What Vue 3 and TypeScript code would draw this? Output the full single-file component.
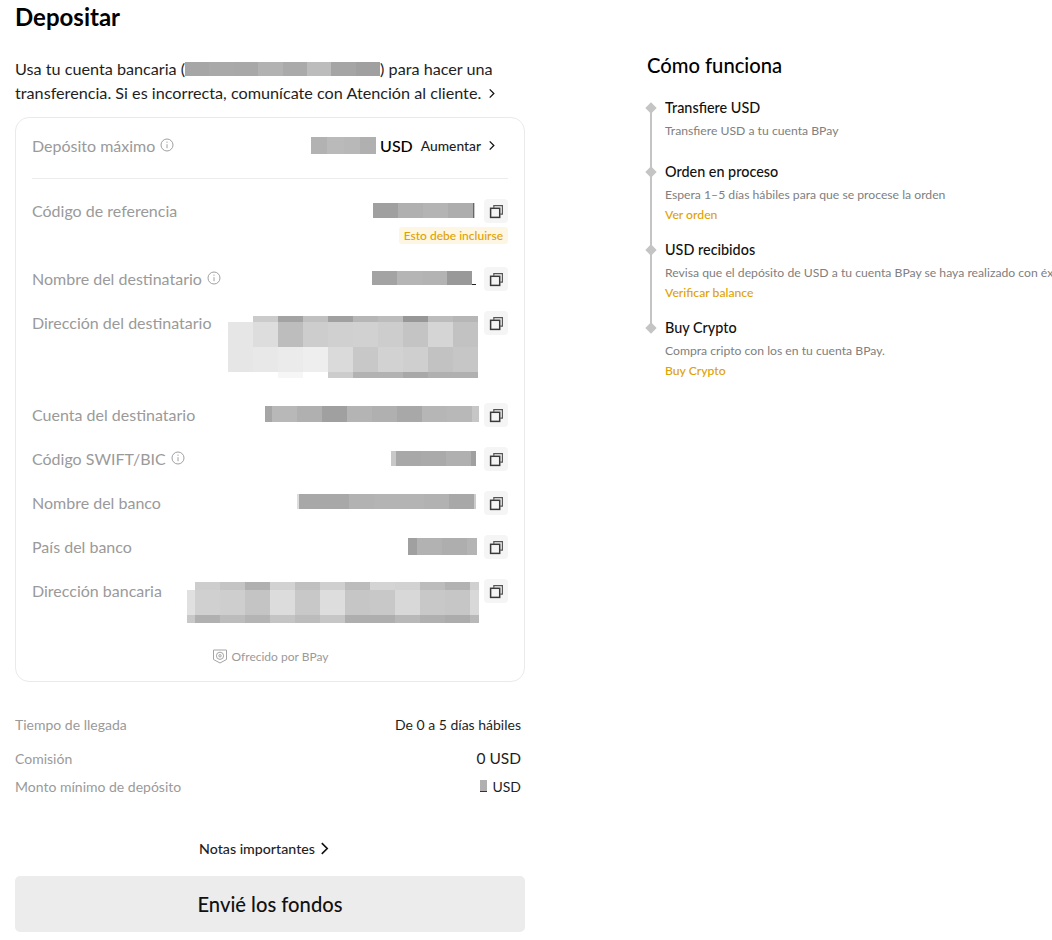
<template>
  <div class="page">
    <section class="left">
      <h1>Depositar</h1>
      <p class="intro">
        <span class="line">Usa tu cuenta bancaria (<span class="intro-mask"><i v-for="(c, i) in introCells" :key="i" :style="{ background: c }"></i></span>) para hacer una</span>
        <span class="line">transferencia. Si es incorrecta, comunícate con Atención al cliente.
          <svg class="chev-sm" viewBox="0 0 8 12"><path d="M1.5 1.5 6 6l-4.5 4.5" /></svg>
        </span>
      </p>

      <div class="card">
        <div class="max-row">
          <span class="label">Depósito máximo
            <svg class="info" viewBox="0 0 14 14"><circle cx="7" cy="7" r="6" /><path d="M7 6.2v4M7 3.6v1.2" /></svg>
          </span>
          <span class="max-value">
            <span class="mask-row max-mask">
              <i v-for="(c, i) in maxCells" :key="i" :style="cellStyle(c)"></i>
            </span>
            <b>USD</b>
            <span class="raise">Aumentar</span>
            <svg class="chev-sm" viewBox="0 0 8 12"><path d="M1.5 1.5 6 6l-4.5 4.5" /></svg>
          </span>
        </div>
        <div class="divider"></div>

        <div v-for="row in rows" :key="row.label" class="row" :style="{ minHeight: row.height + 'px' }">
          <span class="label">{{ row.label }}
            <svg v-if="row.info" class="info" viewBox="0 0 14 14"><circle cx="7" cy="7" r="6" /><path d="M7 6.2v4M7 3.6v1.2" /></svg>
          </span>
          <div class="value">
            <div class="value-line">
              <div class="mask" :style="{ marginTop: row.top + 'px', marginRight: row.gap + 'px' }">
                <div
                  v-for="(m, i) in row.mask"
                  :key="i"
                  class="mask-row"
                  :style="{ height: m.h + 'px' }"
                >
                  <i v-for="(c, j) in m.cells" :key="j" :style="cellStyle(c)"></i>
                </div>
              </div>
              <button class="copy" type="button">
                <svg viewBox="0 0 14 14"><path class="back" d="M4.5 3.5V1.5h8v8h-2" /><rect x="1.5" y="4" width="8.5" height="8.5" /></svg>
              </button>
            </div>
            <span v-if="row.badge" class="badge">{{ row.badge }}</span>
          </div>
        </div>

        <div class="offered">
          <svg viewBox="0 0 16 16"><path d="M1.5 2h13v9.5L8 15l-6.5-3.5z" /><circle cx="8" cy="7.8" r="3.6" /><circle cx="8" cy="7.8" r="1.2" /></svg>
          Ofrecido por BPay
        </div>
      </div>

      <div class="summary">
        <div class="sum-row first"><span>Tiempo de llegada</span><span class="dark">De 0 a 5 días hábiles</span></div>
        <div class="sum-row second"><span>Comisión</span><span class="dark big">0 USD</span></div>
        <div class="sum-row third"><span>Monto mínimo de depósito</span><span class="dark min-value"><i class="min-mask"></i>USD</span></div>
      </div>

      <a class="notes">Notas importantes
        <svg viewBox="0 0 8 12"><path d="M1.5 1 6.5 6l-5 5" /></svg>
      </a>
      <button class="send" type="button">Envié los fondos</button>
    </section>

    <aside class="right">
      <h2>Cómo funciona</h2>
      <ul class="steps">
        <li v-for="(s, i) in steps" :key="s.title" class="step" :class="{ last: i === steps.length - 1 }" :style="{ height: s.height + 'px' }">
          <span class="dot"></span>
          <div class="step-title">{{ s.title }}</div>
          <div class="step-text">{{ s.text }}</div>
          <a v-if="s.link" class="step-link">{{ s.link }}</a>
        </li>
      </ul>
    </aside>
  </div>
</template>

<script setup lang="ts">
interface MaskRow {
  h: number;
  cells: string[];
}

interface Row {
  label: string;
  info?: boolean;
  badge?: string;
  height: number;
  top: number;
  gap: number;
  mask: MaskRow[];
}

const clear = "transparent";
// residue of the blurred text under the last mosaic block
const underline = "linear-gradient(transparent 92%, #222 92%)|4";

// a cell is "colour" (25px wide) or "colour|width"
const cellStyle = (cell: string) => {
  const [background, width] = cell.split("|");
  return { background, width: (width ?? "25") + "px" };
};

const introCells = ["#a6a6a6", "#a9a9a9", "#a8a8a8", "#b2b2b2", "#aaaaaa", "#bcbcbc", "#a5a5a5", "#a0a0a0"];
const maxCells = ["#b2b2b2|16", "#bababa|17", "#b8b8b8|16", "#b0b0b0|16"];

const rows: Row[] = [
  {
    label: "Código de referencia",
    badge: "Esto debe incluirse",
    height: 68,
    top: 3,
    gap: 9,
    mask: [{ h: 15, cells: ["#a0a0a0|25", "#b0b0b0|25", "#b4b4b4|25", "#adadad|25", "#666666|1", "#c8c8c8|1"] }],
  },
  {
    label: "Nombre del destinatario",
    info: true,
    height: 44,
    top: 3,
    gap: 8,
    mask: [{ h: 14, cells: ["#a3a3a3", "#b5b5b5", "#b3b3b3", "#999999", underline] }],
  },
  {
    label: "Dirección del destinatario",
    height: 92,
    top: 4,
    gap: 6,
    mask: [
      { h: 6, cells: [clear, "#cbcbcb", "#a3a3a3", "#c0c0c0", "#a0a0a0", "#b6b6b6", "#bcbcbc", "#979797", "#bcbcbc", "#b6b6b6"] },
      { h: 25, cells: ["#e6e6e6", "#dddddd", "#bdbdbd", "#cdcdcd", "#d0d0d0", "#d1d1d1", "#cdcdcd", "#c4c4c4", "#d5d5d5", "#c2c2c2"] },
      { h: 25, cells: ["#e6e6e6", "#e8e8e8", "#ebebeb", "#eeeeee", "#dadada", "#c8c8c8", "#d2d2d2", "#cfcfcf", "#c2c2c2", "#c6c6c6"] },
      { h: 6, cells: [clear, clear, "#f6f6f6", clear, "#cccccc", "#b2b2b2", "#b2b2b2", "#a8a8a8", "#b0b0b0", "#b0b0b0"] },
    ],
  },
  {
    label: "Cuenta del destinatario",
    height: 44,
    top: 2,
    gap: 5,
    mask: [{ h: 16, cells: ["#a6a6a6|7", "#b8b8b8", "#b0b0b0", "#a0a0a0", "#b4b4b4", "#b0b0b0", "#a8a8a8", "#b6b6b6", "#b8b8b8", "#c6c6c6|7"] }],
  },
  {
    label: "Código SWIFT/BIC",
    info: true,
    height: 44,
    top: 3,
    gap: 8,
    mask: [{ h: 15, cells: ["#c8c8c8|5", "#a8a8a8", "#aaaaaa", "#b0b0b0", "#a0a0a0|5"] }],
  },
  {
    label: "Nombre del banco",
    height: 44,
    top: 2,
    gap: 8,
    mask: [{ h: 15, cells: ["#dddddd|2", "#a8a8a8|50", "#b2b2b2", "#b4b4b4|50", "#b2b2b2", "#a8a8a8", "#cccccc|2"] }],
  },
  {
    label: "País del banco",
    height: 44,
    top: 2,
    gap: 7,
    mask: [{ h: 17, cells: ["#a0a0a0|9", "#b2b2b2", "#aeaeae", "#b4b4b4|10"] }],
  },
  {
    label: "Dirección bancaria",
    height: 52,
    top: 2,
    gap: 5,
    mask: [
      { h: 8, cells: [clear + "|8", "#cdcdcd", "#c4c4c4", "#b0b0b0", "#d2d2d2", "#c0c0c0", "#cfcfcf", "#bcbcbc", "#d4d4d4", "#d2d2d2", "#bcbcbc", "#b2b2b2", "#d0d0d0|9"] },
      { h: 25, cells: ["#e0e0e0|8", "#d0d0d0", "#cecece", "#c4c4c4", "#dcdcdc", "#c8c8c8", "#dddddd", "#c6c6c6", "#c8c8c8", "#d8d8d8", "#c8c8c8", "#c6c6c6", "#d8d8d8|9"] },
      { h: 8, cells: ["#c8c8c8|8", "#b0b0b0", "#bcbcbc", "#b4b4b4", "#c4c4c4", "#bcbcbc", "#c6c6c6", "#aeaeae", "#aeaeae", "#b8b8b8", "#b0b0b0", "#acacac", "#b8b8b8|9"] },
    ],
  },
];

const steps = [
  { title: "Transfiere USD", text: "Transfiere USD a tu cuenta BPay", height: 64 },
  { title: "Orden en proceso", text: "Espera 1–5 días hábiles para que se procese la orden", link: "Ver orden", height: 78 },
  { title: "USD recibidos", text: "Revisa que el depósito de USD a tu cuenta BPay se haya realizado con éxito", link: "Verificar balance", height: 78 },
  { title: "Buy Crypto", text: "Compra cripto con los en tu cuenta BPay.", link: "Buy Crypto", height: 60 },
];
</script>

<style>
html,
body {
  margin: 0;
  background: #fff;
  overflow: hidden;
}
</style>

<style scoped>
.page {
  display: flex;
  width: 1052px;
  height: 940px;
  overflow: hidden;
  font-family: Lato, "Open Sans", sans-serif;
  color: #000;
}

.left {
  flex: none;
  width: 510px;
  margin-left: 15px;
}

h1 {
  margin: 3px 0 0;
  font-size: 24px;
  line-height: 28px;
  font-weight: 700;
}

.intro {
  margin: 26px 0 0;
  font-size: 16.2px;
  line-height: 24px;
  color: #1e1e1e;
}

.line {
  display: block;
  white-space: nowrap;
}

.intro-mask {
  display: inline-flex;
  width: 195px;
  height: 14px;
  vertical-align: -1px;
}

.intro-mask i {
  flex: 1;
}

.chev-sm {
  width: 8px;
  height: 11px;
  margin-left: 3px;
  fill: none;
  stroke: #111;
  stroke-width: 1.4;
}

.card {
  box-sizing: border-box;
  height: 565px;
  margin-top: 12px;
  padding: 0 16px;
  border: 1px solid #eaeaea;
  border-radius: 14px;
}

.max-row {
  display: flex;
  justify-content: space-between;
  align-items: center;
  height: 54px;
  padding-bottom: 6px;
}

.label {
  display: inline-flex;
  align-items: center;
  gap: 5px;
  height: 20px;
  font-size: 16px;
  color: #9a9a9a;
  white-space: nowrap;
}

.info {
  width: 14px;
  height: 14px;
  fill: none;
  stroke: #a0a0a0;
  stroke-width: 1;
}

.max-value {
  display: flex;
  align-items: center;
  padding-right: 12px;
}

.max-mask {
  height: 17px;
}

.max-value b {
  margin-left: 4px;
  font-size: 16px;
  font-weight: 500;
}

.raise {
  margin-left: 8px;
  font-size: 13.8px;
  font-weight: 500;
  color: #1e1e1e;
}

.max-value .chev-sm {
  margin-left: 7px;
}

.divider {
  height: 1px;
  margin-bottom: 21px;
  background: #ececec;
}

.row {
  display: flex;
  justify-content: space-between;
  align-items: flex-start;
}

.value {
  display: flex;
  flex-direction: column;
  align-items: flex-end;
}

.value-line {
  display: flex;
  align-items: flex-start;
}

.mask-row {
  display: flex;
}

.mask-row i {
  display: block;
  flex: none;
}

.copy {
  display: flex;
  align-items: center;
  justify-content: center;
  width: 24px;
  height: 24px;
  margin-top: -1px;
  padding: 0;
  border: 0;
  border-radius: 4px;
  background: #f5f5f5;
}

.copy svg {
  width: 15px;
  height: 15px;
  fill: none;
  stroke: #3a3a3a;
  stroke-width: 1.4;
}

.copy .back {
  stroke: #555;
  stroke-width: 1.1;
}

.badge {
  margin-top: 4px;
  padding: 0 5px;
  border-radius: 3px;
  background: #fdf6e3;
  color: #e0a100;
  font-size: 12px;
  font-weight: 500;
  line-height: 17px;
}

.offered {
  display: flex;
  align-items: center;
  justify-content: center;
  gap: 4px;
  margin-top: 16px;
  font-size: 12px;
  color: #9a9a9a;
}

.offered svg {
  width: 16px;
  height: 16px;
  fill: none;
  stroke: #a4a4a4;
  stroke-width: 1;
}

.summary {
  margin-top: 33px;
  padding-right: 4px;
  font-size: 14px;
  color: #9a9a9a;
}

.sum-row {
  display: flex;
  justify-content: space-between;
  align-items: center;
}

.first {
  height: 18px;
}

.second {
  height: 18px;
  margin-top: 16px;
}

.third {
  height: 18px;
  margin-top: 10px;
}

.dark {
  color: #1e1e1e;
}

.big {
  font-size: 15.5px;
}

.min-value {
  display: flex;
  align-items: center;
  gap: 5px;
}

.min-mask {
  display: block;
  width: 7px;
  height: 12px;
  background: linear-gradient(#b0b0b0 88%, #333 88%);
}

.notes {
  display: flex;
  align-items: center;
  justify-content: center;
  gap: 5px;
  margin-top: 43px;
  padding-right: 12px;
  height: 20px;
  font-size: 14.2px;
  font-weight: 500;
  color: #1e1e1e;
}

.notes svg {
  width: 9px;
  height: 13px;
  fill: none;
  stroke: #111;
  stroke-width: 1.5;
}

.send {
  display: block;
  width: 100%;
  height: 56px;
  margin-top: 18px;
  padding: 0;
  border: 0;
  border-radius: 5px;
  background: #ececec;
  color: #111;
  font-family: inherit;
  font-size: 20.2px;
  font-weight: 500;
}

.right {
  flex: none;
  margin-left: 122px;
  white-space: nowrap;
}

h2 {
  margin: 53px 0 0;
  font-size: 20.2px;
  line-height: 24px;
  font-weight: 500;
}

.steps {
  margin: 23px 0 0;
  padding: 0;
  list-style: none;
}

.step {
  position: relative;
  padding-left: 18px;
}

.step::before {
  content: "";
  position: absolute;
  left: 3px;
  top: 8px;
  bottom: -8px;
  width: 2px;
  background: #c4c4c4;
}

.step.last::before {
  display: none;
}

.dot {
  position: absolute;
  left: 0;
  top: 4px;
  width: 8px;
  height: 8px;
  background: #c4c4c4;
  transform: rotate(45deg);
}

.step-title {
  font-size: 14.4px;
  font-weight: 500;
  line-height: 16px;
  color: #111;
}

.step-text {
  margin-top: 7px;
  font-size: 12.2px;
  line-height: 16px;
  color: #808080;
}

.step-link {
  display: block;
  margin-top: 4px;
  font-size: 12.2px;
  font-weight: 500;
  line-height: 16px;
  color: #e0a100;
}
</style>
